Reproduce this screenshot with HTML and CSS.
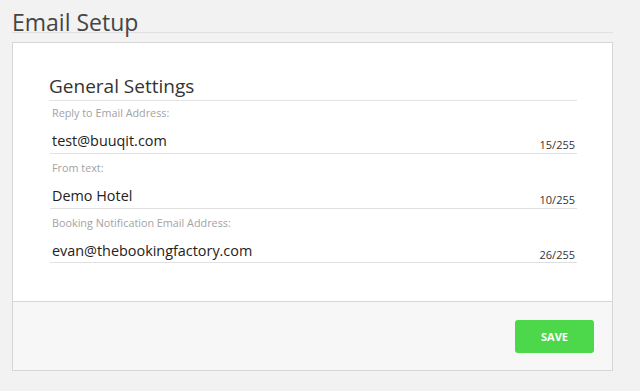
FILE: index.html
```html
<!DOCTYPE html>
<html lang="en">
<head>
    <meta charset="UTF-8">
    <meta name="viewport" content="width=device-width, initial-scale=1.0">
    <title>Email Setup</title>
    <link rel="stylesheet" href="styles.css">
</head>
<body>
    <div class="page">
        <h1 class="page-title">Email Setup</h1>

        <div class="card">
            <div class="card-body">
                <h2 class="section-title">General Settings</h2>

                <div class="field">
                    <label class="field-label">Reply to Email Address:</label>
                    <div class="field-row">
                        <span class="field-value">test@buuqit.com</span>
                        <span class="field-count">15/255</span>
                    </div>
                </div>

                <div class="field">
                    <label class="field-label">From text:</label>
                    <div class="field-row">
                        <span class="field-value">Demo Hotel</span>
                        <span class="field-count">10/255</span>
                    </div>
                </div>

                <div class="field">
                    <label class="field-label">Booking Notification Email Address:</label>
                    <div class="field-row">
                        <span class="field-value">evan@thebookingfactory.com</span>
                        <span class="field-count">26/255</span>
                    </div>
                </div>
            </div>

            <div class="card-footer">
                <button class="btn-save">SAVE</button>
            </div>
        </div>
    </div>
</body>
</html>
```

FILE: styles.css
```css
body {
    margin: 0;
    padding: 0;
    background-color: #f2f2f2;
    font-family: 'Open Sans', 'Liberation Sans', sans-serif;
    color: #333;
}

.page {
    padding: 0 27px 0 12px;
}

.page-title {
    margin: 0;
    padding-top: 12px;
    font-size: 23px;
    font-weight: 400;
    line-height: 20px;
    color: #454545;
    border-bottom: 1px solid #e0e0e0;
}

.card {
    margin-top: 9px;
    background-color: #fff;
    border: 1px solid #d6d6d6;
}

.card-body {
    padding: 32px 35px 38px 36px;
}

.section-title {
    margin: 0;
    padding-bottom: 3px;
    font-size: 19px;
    font-weight: 400;
    line-height: 22px;
    color: #333;
    border-bottom: 1px solid #e3e3e3;
}

.field {
    margin: 7px 0 0 1px;
}

.section-title + .field {
    margin-top: 5px;
}

.field-label {
    display: block;
    padding-left: 2px;
    margin-bottom: 11px;
    font-size: 10.8px;
    line-height: 14px;
    color: #a3a3a3;
}

.field-row {
    display: flex;
    justify-content: space-between;
    align-items: flex-end;
    padding-bottom: 2px;
    border-bottom: 1px solid #e0e0e0;
}

/* last line sits a pixel higher */
.field:last-child .field-row {
    padding-bottom: 1px;
}

.field-value {
    padding-left: 2px;
    font-size: 14.4px;
    line-height: 20px;
    color: #222;
}

.field-count {
    padding-right: 2px;
    font-size: 11px;
    line-height: 12px;
    color: #333;
}

.card-footer {
    display: flex;
    justify-content: flex-end;
    padding: 18px 18px 17px;
    background-color: #f7f7f7;
    border-top: 1px solid #d6d6d6;
}

.btn-save {
    width: 79px;
    height: 33px;
    border: none;
    border-radius: 3px;
    background-color: #4cd84a;
    color: #fff;
    font-family: 'Open Sans', 'Liberation Sans', sans-serif;
    font-size: 11px;
    font-weight: 700;
    cursor: pointer;
}
```
